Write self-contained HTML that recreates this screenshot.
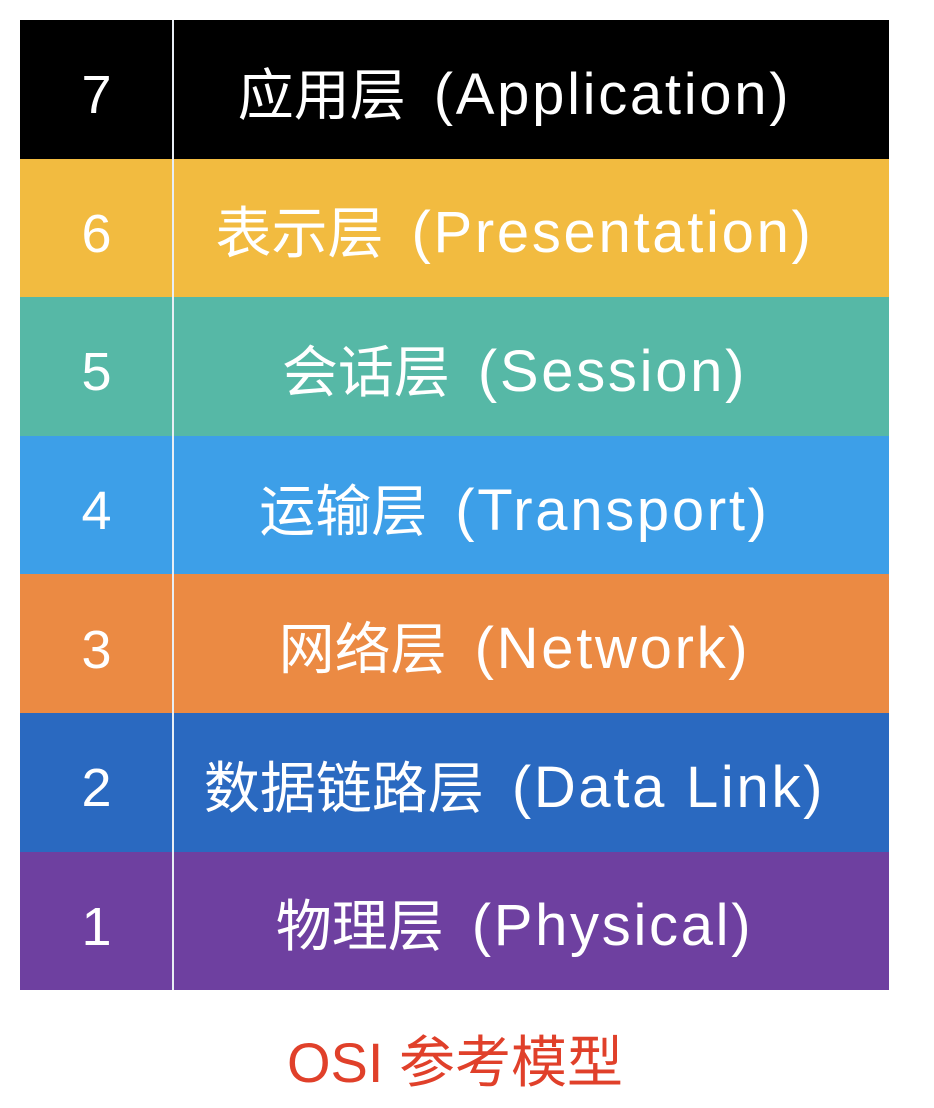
<!DOCTYPE html>
<html><head><meta charset="utf-8"><style>
body{margin:0;background:#fff;width:934px;height:1108px;position:relative;overflow:hidden;font-family:"Liberation Sans","Noto Sans CJK SC",sans-serif;}
.t{position:absolute;left:20px;top:20px;width:869px;}
.r{height:138.6px;position:relative;color:#fff;font-size:56px;}
.n{position:absolute;left:0;width:153px;top:6px;height:100%;display:flex;align-items:center;justify-content:center;font-size:54px;}
.x{position:absolute;left:154px;right:34px;top:2px;height:100%;display:flex;align-items:center;justify-content:center;white-space:nowrap;}
.x span{font-size:58px;letter-spacing:2.7px;margin-left:28px;position:relative;top:3px;}
.line{position:absolute;left:172px;top:20px;width:2px;height:970px;background:#e8eef4;}
.cap{position:absolute;left:0;width:910px;top:1018px;text-align:center;color:#e0402a;font-size:56px;}
</style></head><body>
<div class="t">
<div class="r" style="background:#000"><div class="n">7</div><div class="x">应用层<span>(Application)</span></div></div>
<div class="r" style="background:#f2bb40"><div class="n">6</div><div class="x">表示层<span>(Presentation)</span></div></div>
<div class="r" style="background:#56b8a6"><div class="n">5</div><div class="x">会话层<span>(Session)</span></div></div>
<div class="r" style="background:#3d9fe8"><div class="n">4</div><div class="x">运输层<span>(Transport)</span></div></div>
<div class="r" style="background:#eb8a43"><div class="n">3</div><div class="x">网络层<span>(Network)</span></div></div>
<div class="r" style="background:#2a69c0"><div class="n">2</div><div class="x">数据链路层<span>(Data Link)</span></div></div>
<div class="r" style="background:#6e40a0"><div class="n">1</div><div class="x">物理层<span>(Physical)</span></div></div>
</div>
<div class="line"></div>
<div class="cap">OSI 参考模型</div>
</body></html>
